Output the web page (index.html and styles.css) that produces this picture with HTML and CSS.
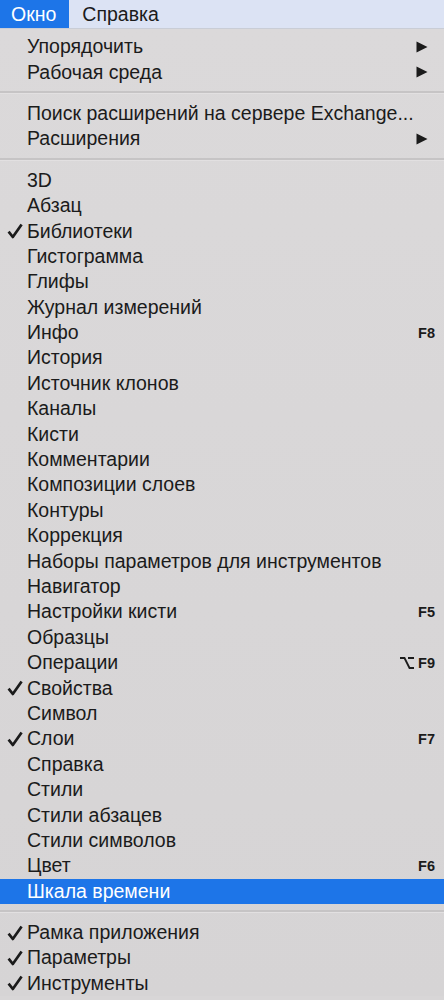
FILE: index.html
```html
<!DOCTYPE html>
<html>
<head>
    <title>Окно</title>
    <link rel="stylesheet" href="styles.css">
</head>
<body>
    <header class="menubar">
        <span class="menubar-item active">Окно</span>
        <span class="menubar-item">Справка</span>
    </header>
    <main class="menu" id="menu">
        <!-- Items are built by the script below -->
    </main>
    <script>
        // "-" is a separator; check, arrow, key, opt and hl are flags
        const items = [
            { label: "Упорядочить", arrow: true },
            { label: "Рабочая среда", arrow: true },
            "-",
            { label: "Поиск расширений на сервере Exchange..." },
            { label: "Расширения", arrow: true },
            "-",
            { label: "3D" },
            { label: "Абзац" },
            { label: "Библиотеки", check: true },
            { label: "Гистограмма" },
            { label: "Глифы" },
            { label: "Журнал измерений" },
            { label: "Инфо", key: "F8" },
            { label: "История" },
            { label: "Источник клонов" },
            { label: "Каналы" },
            { label: "Кисти" },
            { label: "Комментарии" },
            { label: "Композиции слоев" },
            { label: "Контуры" },
            { label: "Коррекция" },
            { label: "Наборы параметров для инструментов" },
            { label: "Навигатор" },
            { label: "Настройки кисти", key: "F5" },
            { label: "Образцы" },
            { label: "Операции", key: "F9", opt: true },
            { label: "Свойства", check: true },
            { label: "Символ" },
            { label: "Слои", check: true, key: "F7" },
            { label: "Справка" },
            { label: "Стили" },
            { label: "Стили абзацев" },
            { label: "Стили символов" },
            { label: "Цвет", key: "F6" },
            { label: "Шкала времени", hl: true },
            "-",
            { label: "Рамка приложения", check: true },
            { label: "Параметры", check: true },
            { label: "Инструменты", check: true }
        ];

        const checkSvg = '<svg width="16" height="16" viewBox="0 0 16 16"><path d="M1.6 8.6 L5.8 14 L14.6 1.4" fill="none" stroke="currentColor" stroke-width="2.7" stroke-linejoin="round"/></svg>';
        const arrowSvg = '<svg width="12" height="12" viewBox="0 0 12 12"><path d="M0.5 0.5 L11.5 6 L0.5 11.5 Z" fill="currentColor"/></svg>';
        const optSvg = '<svg width="14" height="12" viewBox="0 0 14 12"><path d="M0 1 H4.5 L9.5 11 H14 M8 1 H14" fill="none" stroke="currentColor" stroke-width="1.8"/></svg>';

        const menu = document.getElementById("menu");

        items.forEach(item => {
            if (item === "-") {
                const sep = document.createElement("div");
                sep.className = "separator";
                menu.appendChild(sep);
                return;
            }

            const row = document.createElement("div");
            row.className = item.hl ? "item highlighted" : "item";

            let right = "";
            if (item.arrow) {
                right = `<span class="arrow">${arrowSvg}</span>`;
            } else if (item.key) {
                right = `<span class="key">${item.opt ? optSvg : ""}${item.key}</span>`;
            }

            row.innerHTML = `
                <span class="check">${item.check ? checkSvg : ""}</span>
                <span class="label">${item.label}</span>
                ${right}
            `;
            menu.appendChild(row);
        });
    </script>
</body>
</html>
```

FILE: styles.css
```css
body {
    margin: 0;
    padding: 0;
    width: 444px;
    height: 1000px;
    overflow: hidden;
    font-family: "Liberation Sans", Arial, sans-serif;
    font-size: 19.5px;
    color: #1b1b1b;
    background-color: #d8d6d7;
}

.menubar {
    display: flex;
    height: 29px;
    background-color: #dce3f4;
    border-bottom: 1px solid #c9cdd6;
    box-sizing: border-box;
}

.menubar-item {
    display: flex;
    align-items: center;
    padding: 0 12px 0 13px;
    color: #1b1b1b;
}

.menubar-item.active {
    background-color: #1d75e8;
    color: #fff;
    padding: 0 13px 0 11px;
}

.menu {
    padding-top: 5px;
    background: linear-gradient(#dbd9da, #d6d4d5);
}

.item {
    display: flex;
    align-items: center;
    height: 25.4px;
    padding-right: 9px;
}

.item.highlighted {
    background-color: #1d75e8;
    color: #fff;
}

.check {
    display: flex;
    align-items: center;
    justify-content: center;
    width: 27px;
    padding-left: 3px;
    box-sizing: border-box;
    color: #1b1b1b;
}

.label {
    flex: 1;
    white-space: nowrap;
}

.arrow {
    display: flex;
    margin-right: 7px;
    color: #1b1b1b;
}

.key {
    display: flex;
    align-items: center;
    gap: 4px;
    font-size: 14.5px;
    font-weight: bold;
}

.separator {
    height: 16px;
    display: flex;
    flex-direction: column;
    justify-content: center;
}

.separator::before {
    content: "";
    display: block;
    height: 2px;
    background-color: #c6c4c5;
    border-bottom: 1px solid #e2e0e1;
}
```
